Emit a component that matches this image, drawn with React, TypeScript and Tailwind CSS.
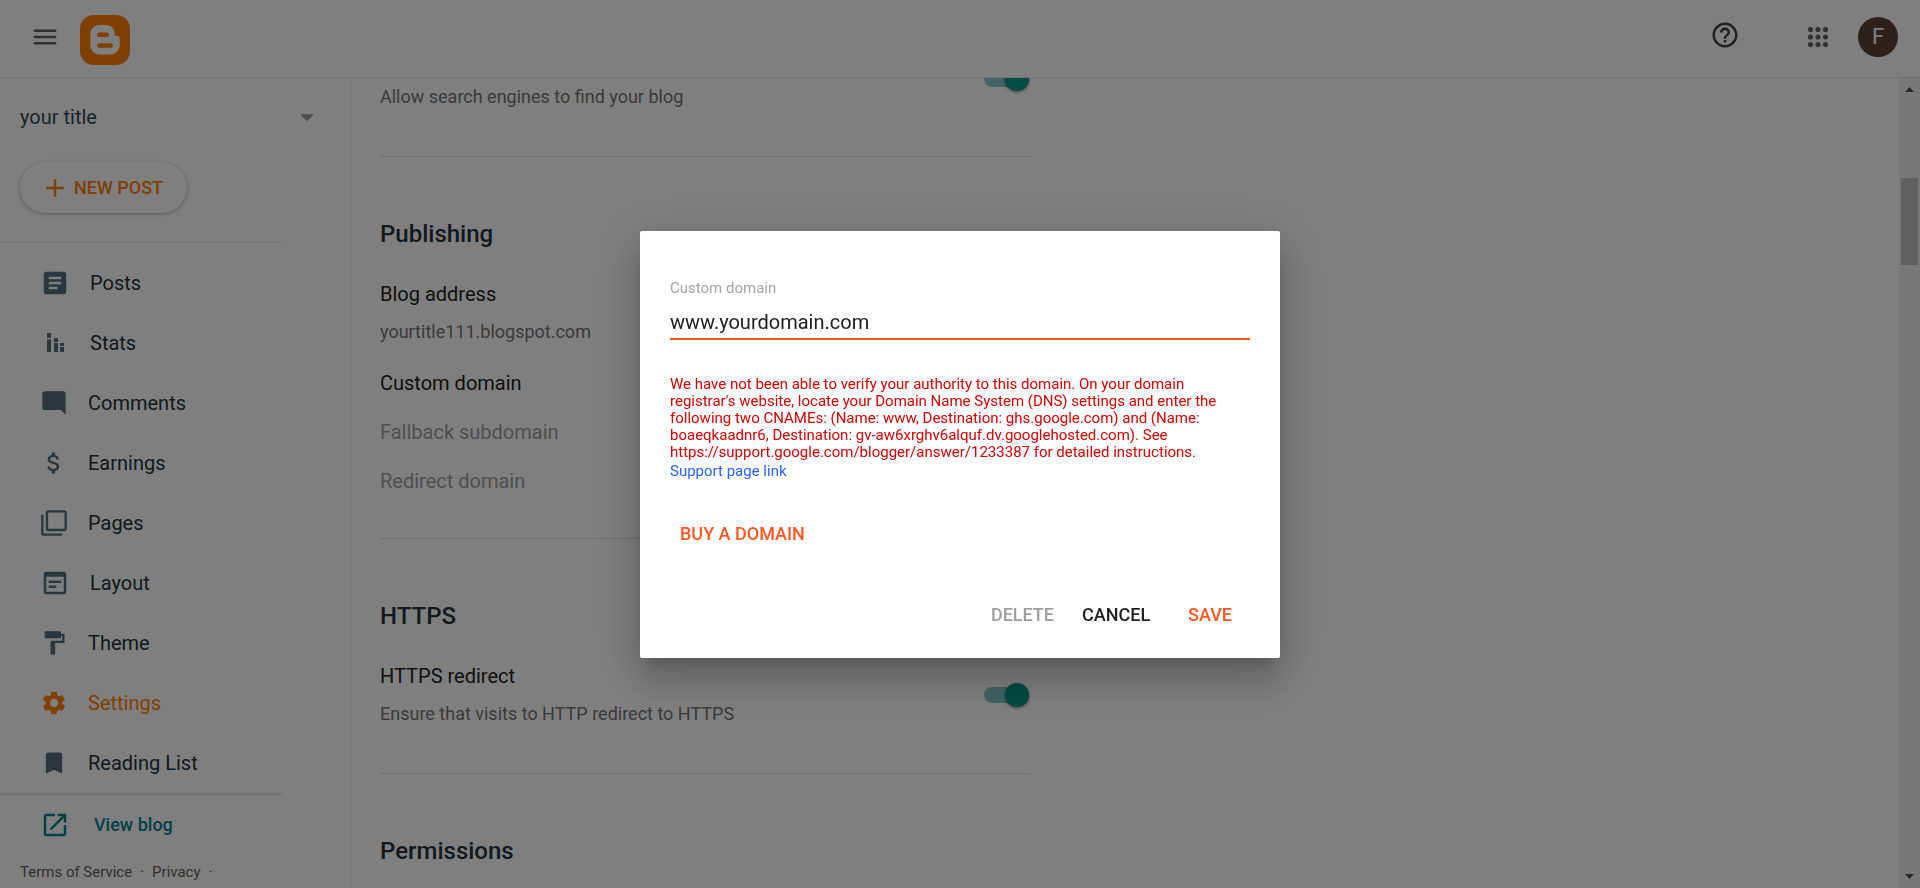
import React from "react";
import { IconType } from "react-icons";
import {
  MdAdd,
  MdArrowDropDown,
  MdArticle,
  MdAttachMoney,
  MdBookmark,
  MdFilterNone,
  MdFormatPaint,
  MdHelpOutline,
  MdMenu,
  MdModeComment,
  MdOpenInNew,
  MdOutlineWysiwyg,
  MdSettings,
} from "react-icons/md";

interface INavItem {
  label: string;
  icon: IconType | React.FC<{ size?: number }>;
  size: number;
  active?: boolean;
}

const StatsIcon: React.FC<{ size?: number }> = ({ size = 30 }) => (
  <svg width={size} height={size} viewBox="0 0 30 30" fill="currentColor">
    <path d="M7 5h4v5H7zM7 11.500h4V24H7zM14 10h4v4h-4zM14 15h4v9h-4zM20 15h4v3h-4zM20 19h4v5h-4z" />
  </svg>
);

const BloggerLogo: React.FC = () => (
  <svg width="50" height="50" viewBox="0 0 50 50">
    <rect width="50" height="50" rx="14" fill="#ff8000" />
    <path
      fill="#fff"
      d="M19 10h7c4.800 0 8.500 3.700 8.500 8.300 0 1.700.8 2.700 2.300 2.700h.7c1.300 0 2.200.9 2.200 2.200V30c0 5.300-4.300 9.600-9.600 9.600H19.900c-5.300 0-9.600-4.300-9.600-9.600V19c0-5 3.900-9 8.700-9z"
    />
    <rect x="17" y="17.500" width="12" height="4.500" rx="2.200" fill="#ff8000" />
    <rect x="17" y="28.300" width="16" height="4.500" rx="2.200" fill="#ff8000" />
  </svg>
);

const AppsIcon: React.FC = () => (
  <svg width="20" height="20" viewBox="0 0 20 20" fill="currentColor">
    {[2.5, 10, 17.5].map((cy) =>
      [2.5, 10, 17.5].map((cx) => <circle key={`${cx}-${cy}`} cx={cx} cy={cy} r="2.6" />)
    )}
  </svg>
);

const navItems: INavItem[] = [
  { label: "Posts", icon: MdArticle, size: 30 },
  { label: "Stats", icon: StatsIcon, size: 30 },
  { label: "Comments", icon: MdModeComment, size: 28 },
  { label: "Earnings", icon: MdAttachMoney, size: 28 },
  { label: "Pages", icon: MdFilterNone, size: 28 },
  { label: "Layout", icon: MdOutlineWysiwyg, size: 30 },
  { label: "Theme", icon: MdFormatPaint, size: 28 },
  { label: "Settings", icon: MdSettings, size: 28, active: true },
  { label: "Reading List", icon: MdBookmark, size: 28 },
];

const Header: React.FC = () => (
  <header className="flex items-center h-[78px] shrink-0 pl-[30px] pr-[22px] pb-1 border-b border-gray-200 text-[#5f6368]">
    <button type="button" aria-label="Main menu" className="mr-5">
      <MdMenu size={30} />
    </button>
    <a href="#home" aria-label="Blogger" className="mt-1.5">
      <BloggerLogo />
    </a>
    <div className="flex items-center ml-auto">
      <button type="button" aria-label="Help" className="mr-[68px] mb-1 text-[#3c4043]">
        <MdHelpOutline size={30} />
      </button>
      <button type="button" aria-label="Google apps" className="mr-[30px]">
        <AppsIcon />
      </button>
      <button type="button" aria-label="Account" className="size-10 rounded-full bg-[#5d4037] text-white text-[22px]">
        F
      </button>
    </div>
  </header>
);

const Sidebar: React.FC = () => (
  <aside className="flex flex-col w-[351px] shrink-0 border-r border-gray-200 text-[#263238]">
    <div className="relative flex items-center h-[84px] pl-5 pr-7 pb-1.5">
      <select aria-label="Blog" className="w-full appearance-none bg-transparent text-xl text-[#37474f]">
        <option>your title</option>
      </select>
      <MdArrowDropDown size={34} className="absolute right-[26px] text-[#9e9e9e] pointer-events-none" />
    </div>

    <div className="pl-5 w-[282px] h-[81px] border-b border-gray-200">
      <button
        type="button"
        className="flex items-center gap-1 h-[51px] w-[167px] pl-5 rounded-full bg-white text-lg font-medium text-[#ff8000] shadow-[0_1px_4px_rgba(0,0,0,0.3)]"
      >
        <MdAdd size={30} className="shrink-0" />
        NEW POST
      </button>
    </div>

    <nav className="w-[282px] pt-[10px] border-b-2 border-gray-200">
      {navItems.map(({ label, icon: Icon, size, active }) => (
        <a
          key={label}
          href={`#${label}`}
          className={`flex items-center gap-5 h-[60px] pl-10 text-xl ${active ? "text-[#ff8000]" : ""}`}
        >
          <span className={active ? "" : "text-[#546e7a]"}>
            <Icon size={size} />
          </span>
          {label}
        </a>
      ))}
    </nav>

    <a href="#view" className="flex items-center gap-6 h-[60px] pl-10 text-lg font-medium text-[#00838f]">
      <MdOpenInNew size={30} />
      View blog
    </a>
    <div className="flex gap-2 pl-5 pt-[7px] text-[15px] leading-5 text-[#616161]">
      <a href="#terms">Terms of Service</a>
      <span>·</span>
      <a href="#privacy">Privacy</a>
      <span>·</span>
    </div>
  </aside>
);

const Toggle: React.FC<{ label: string }> = ({ label }) => (
  <input
    type="checkbox"
    role="switch"
    defaultChecked
    aria-label={label}
    className="appearance-none flex items-center w-[45px] h-4 mr-0.5 rounded-full bg-[#80cbc4] after:size-6 after:ml-auto after:shrink-0 after:rounded-full after:bg-[#009688] after:shadow-[0_1px_3px_rgba(0,0,0,0.5)]"
  />
);

const Row: React.FC<{ title: string; text: string; toggle?: boolean }> = ({ title, text, toggle }) => (
  <div className="flex items-center justify-between h-[74px]">
    <div>
      <h3 className="text-xl leading-[37px]">{title}</h3>
      <p className="text-lg leading-[37px] text-[#757575]">{text}</p>
    </div>
    {toggle && <Toggle label={title} />}
  </div>
);

const Section: React.FC<{ title: string; children?: React.ReactNode }> = ({ title, children }) => (
  <section className="pt-[63px] pb-[41px] border-b border-[#e0e0e0]">
    <h2 className="mb-7 text-2xl leading-7 font-medium text-[#263238]">{title}</h2>
    {children}
  </section>
);

const SettingsPage: React.FC = () => (
  <main className="flex-1 overflow-hidden pl-[29px] text-[#212121]">
    <div className="w-[651px]">
      {/* tail of the privacy section, its switch is half under the header */}
      <section className="flex items-start justify-between pb-[41px] border-b border-[#e0e0e0]">
        <p className="text-lg leading-[37px] text-[#757575]">Allow search engines to find your blog</p>
        <div className="-mt-[7px]">
          <Toggle label="Visible to search engines" />
        </div>
      </section>
      <Section title="Publishing">
        <Row title="Blog address" text="yourtitle111.blogspot.com" />
        <ul className="pt-[9px] -mb-[9px] text-xl leading-[49px]">
          <li>Custom domain</li>
          <li className="text-[#9e9e9e]">Fallback subdomain</li>
          <li className="text-[#9e9e9e]">Redirect domain</li>
        </ul>
      </Section>
      <Section title="HTTPS">
        <Row title="HTTPS redirect" text="Ensure that visits to HTTP redirect to HTTPS" toggle />
      </Section>
      <Section title="Permissions" />
    </div>
  </main>
);

const Scrollbar: React.FC = () => (
  <div className="flex flex-col items-center w-[21px] shrink-0 py-[7px] bg-[#f1f1f1] text-[#505050]">
    <svg width="9" height="9" viewBox="0 0 9 9" fill="currentColor">
      <path d="M0 7l4.500-5L9 7z" />
    </svg>
    <div className="w-[17px] h-[87px] mt-[84px] bg-[#c1c1c1]" />
    <svg width="9" height="9" viewBox="0 0 9 9" fill="currentColor" className="mt-auto">
      <path d="M0 2l4.500 5L9 2z" />
    </svg>
  </div>
);

const DomainDialog: React.FC = () => (
  <div className="fixed inset-0 flex items-center justify-center bg-black/50">
    <div
      role="dialog"
      aria-modal="true"
      aria-label="Custom domain"
      className="w-[640px] px-[30px] pt-[47px] pb-5 rounded-xs bg-white shadow-[0_11px_15px_-7px_rgba(0,0,0,0.2),0_24px_38px_3px_rgba(0,0,0,0.14),0_9px_46px_8px_rgba(0,0,0,0.12)]"
    >
      <label htmlFor="domain" className="block text-[15px] leading-5 text-[#a6a6a6]">
        Custom domain
      </label>
      <input
        id="domain"
        type="text"
        defaultValue="www.yourdomain.com"
        className="block w-full h-[42px] pt-2 border-b-2 border-[#ff5722] text-xl text-[#212121] outline-none"
      />
      <p className="mt-9 text-[15px] leading-[17px] text-[#d50000]">
        We have not been able to verify your authority to this domain. On your domain registrar's website, locate
        your Domain Name System (DNS) settings and enter the following two CNAMEs: (Name: www, Destination:
        ghs.google.com) and (Name: boaeqkaadnr6, Destination: gv-aw6xrghv6alquf.dv.googlehosted.com). See
        https://support.google.com/blogger/answer/1233387 for detailed instructions.
      </p>
      <a href="#support" className="block text-[15px] leading-5 text-[#2962ff]">
        Support page link
      </a>
      <button type="button" className="mt-[31px] h-[45px] px-[10px] text-lg font-medium text-[#ff5722]">
        BUY A DOMAIN
      </button>
      <div className="flex justify-end mt-9 pr-[18px] text-lg font-medium">
        <button type="button" disabled className="h-[45px] mr-7 text-[#9e9e9e]">
          DELETE
        </button>
        <button type="button" className="h-[45px] mr-[38px] text-[#212121]">
          CANCEL
        </button>
        <button type="button" className="h-[45px] text-[#ff5722]">
          SAVE
        </button>
      </div>
    </div>
  </div>
);

const App: React.FC = () => {
  return (
    <div className="flex flex-col h-screen overflow-hidden bg-white font-[Roboto,sans-serif]">
      <Header />
      <div className="flex flex-1 min-h-0">
        <Sidebar />
        <SettingsPage />
        <Scrollbar />
      </div>
      <DomainDialog />
    </div>
  );
};

export default App;
